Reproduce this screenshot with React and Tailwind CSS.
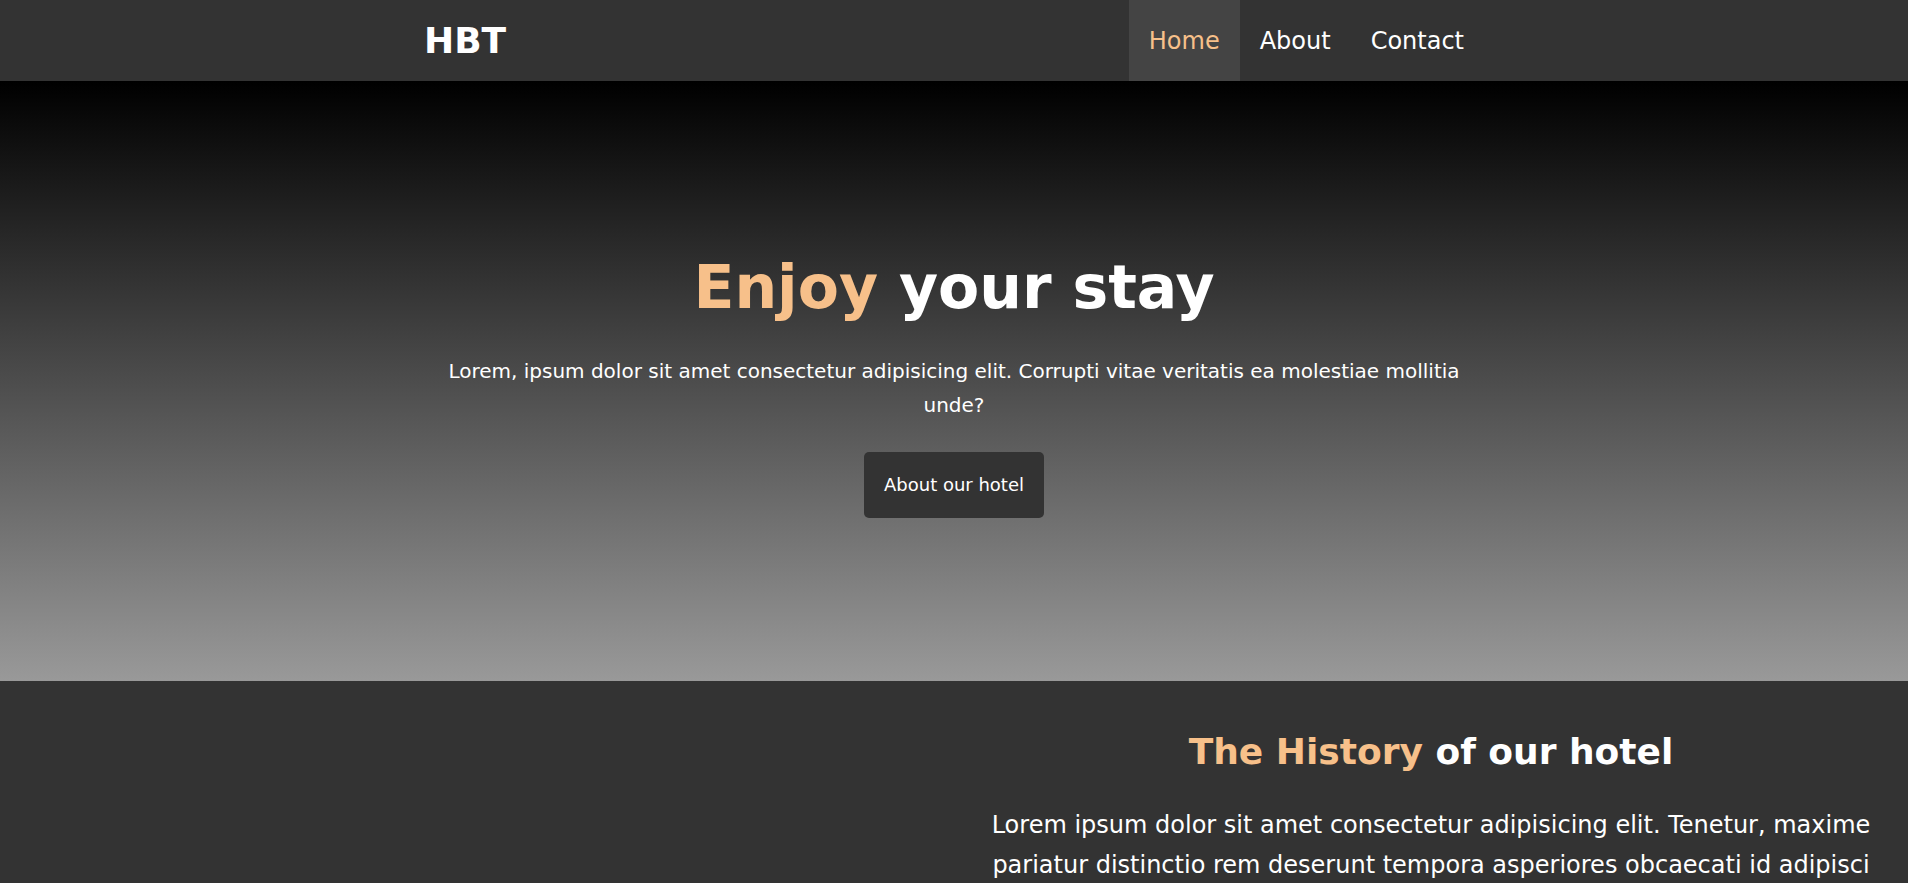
import React from 'react';

const links = ['Home', 'About', 'Contact'];

export default function App() {
  return (
    <div className="min-h-screen bg-[#333] text-white font-['DejaVu_Sans',sans-serif]">
      {/* Top bar */}
      <header className="bg-[#333]">
        <div className="max-w-[1100px] mx-auto px-5 h-[81px] flex items-center justify-between">
          <div className="text-[36px] font-bold leading-none">HBT</div>
          <nav className="flex h-full">
            {links.map((link, i) => (
              <a
                key={link}
                href="#"
                className={`h-full flex items-center px-5 text-[24px] ${
                  i === 0 ? 'bg-[#444] text-[#f7c08a]' : 'text-white'
                }`}
              >
                {link}
              </a>
            ))}
          </nav>
        </div>
      </header>

      {/* Hero */}
      <section className="h-[600px] pt-[8px] bg-[linear-gradient(to_bottom,#000,#999)] flex flex-col items-center justify-center text-center">
        <div className="max-w-[1100px] w-full px-5 flex flex-col items-center">
          <h1 className="text-[60px] font-bold leading-[70px]">
            <span className="text-[#f7c08a]">Enjoy</span> your stay
          </h1>
          <p className="mt-8 max-w-[1030px] text-[20px] leading-[34px]">
            Lorem, ipsum dolor sit amet consectetur adipisicing elit. Corrupti vitae veritatis ea molestiae mollitia unde?
          </p>
          <button className="mt-[30px] h-[66px] px-5 pb-[2px] bg-[#333] rounded-[5px] text-[18px] text-white">
            About our hotel
          </button>
        </div>
      </section>

      {/* History */}
      <section className="grid grid-cols-2">
        <div></div>
        <div className="px-8 pt-[50px] pb-10 text-center">
          <h2 className="text-[36px] font-bold leading-[42px]">
            <span className="text-[#f7c08a]">The History</span> of our hotel
          </h2>
          <p className="mt-[32px] text-[24px] leading-[40px]">
            Lorem ipsum dolor sit amet consectetur adipisicing elit. Tenetur, maxime pariatur distinctio rem deserunt tempora asperiores obcaecati id adipisci quia laudantium eum, quos quasi fugit voluptatum nemo. Architecto, facilis officia.
          </p>
        </div>
      </section>
    </div>
  );
}
